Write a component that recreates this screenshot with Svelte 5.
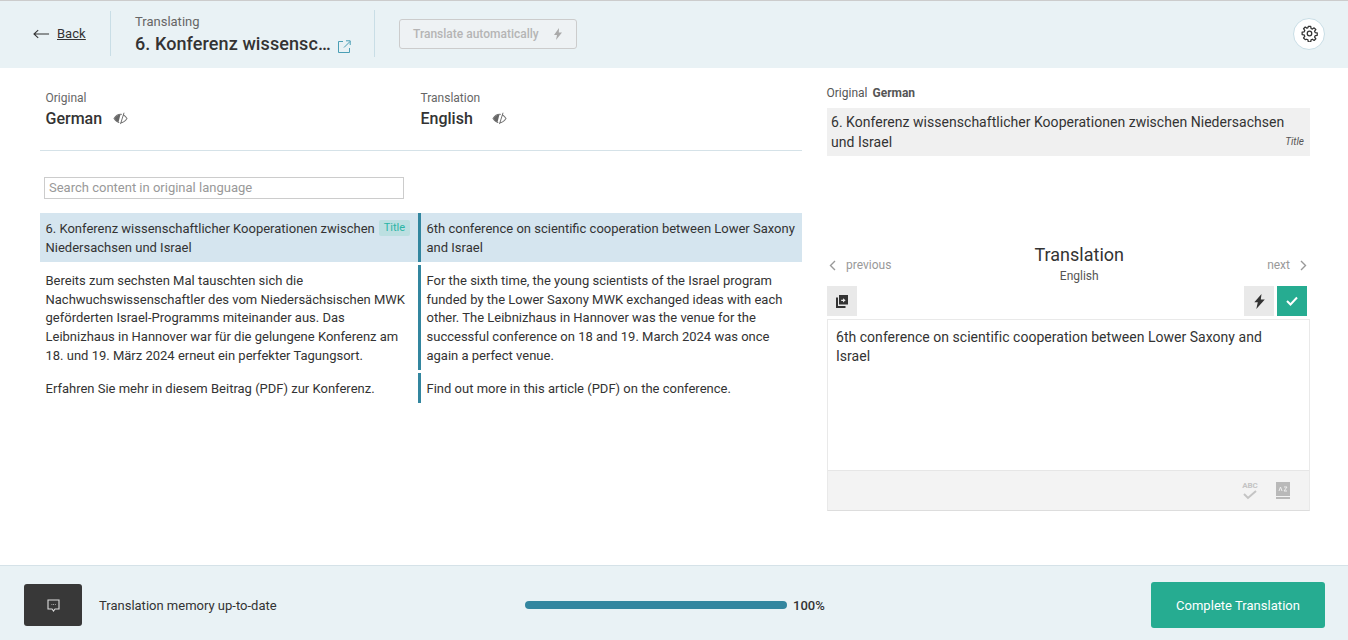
<script>
  const rows = [
    { o: '6. Konferenz wissenschaftlicher Kooperationen zwischen Niedersachsen und Israel', t: '6th conference on scientific cooperation between Lower Saxony and Israel', title: true },
    { o: 'Bereits zum sechsten Mal tauschten sich die Nachwuchswissenschaftler des vom Niedersächsischen MWK geförderten Israel-Programms miteinander aus. Das Leibnizhaus in Hannover war für die gelungene Konferenz am 18. und 19. März 2024 erneut ein perfekter Tagungsort.', t: 'For the sixth time, the young scientists of the Israel program funded by the Lower Saxony MWK exchanged ideas with each other. The Leibnizhaus in Hannover was the venue for the successful conference on 18 and 19. March 2024 was once again a perfect venue.' },
    { o: 'Erfahren Sie mehr in diesem Beitrag (PDF) zur Konferenz.', t: 'Find out more in this article (PDF) on the conference.' }
  ];
</script>

{#snippet eye()}
  <svg class="eye" viewBox="0 0 16 14" width="15" height="13" fill="none">
    <path d="M1 7c2-3 4.300-4.500 7-4.500S13 4 15 7c-2 3-4.300 4.500-7 4.500S3 10 1 7z" stroke="#777" stroke-width="1.100"/>
    <path d="M1.500 7C3 4.500 5 3 8 2.800L5.800 11C4 10.500 2.500 9 1.500 7z" fill="#666"/>
    <path d="M10.800 .8 7 13" stroke="#fff" stroke-width="1.600"/>
    <path d="M11.800 .8 8 13" stroke="#666" stroke-width="1"/>
  </svg>
{/snippet}

<div class="page">
  <header class="top">
    <a class="back" href="#back">
      <svg viewBox="0 0 18 10" width="17" height="10" fill="none" stroke="#333" stroke-width="1.100"><path d="M17 5H1M5.500 .8 1 5l4.500 4.200"/></svg>
      <span>Back</span>
    </a>
    <div class="title-block">
      <div class="small">Translating</div>
      <div class="title">
        <span>6. Konferenz wissensc…</span>
        <svg viewBox="0 0 13 13" width="13" height="13" fill="none" stroke="#4b9fb5" stroke-width="1"><path d="M5 1.500H.5v11h11V8M6 7.500 12 1.500M8 .8h4.200V5"/></svg>
      </div>
    </div>
    <div class="auto-wrap">
      <button class="auto" type="button">
        <span>Translate automatically</span>
        <svg viewBox="0 0 8 12" width="8" height="12" fill="#aaa"><path d="M5 0 0 7h3l-1 5 6-7.500H4.800z"/></svg>
      </button>
    </div>
    <button class="gear" type="button" aria-label="Settings">
      <svg viewBox="0 0 24 24" width="17" height="17" fill="none" stroke="#333" stroke-width="1.800">
        <circle cx="12" cy="12" r="3.200"/>
        <path d="M10.300 2h3.400l.5 2.900 1.900.8 2.400-1.700 2.400 2.400-1.700 2.400.8 1.900 2.900.5v3.400l-2.900.5-.8 1.900 1.700 2.400-2.400 2.400-2.400-1.700-1.900.8-.5 2.900h-3.400l-.5-2.900-1.900-.8L6 20.700l-2.400-2.400 1.700-2.400-.8-1.900-2.900-.5v-3.400l2.900-.5.800-1.900L3.600 5.300 6 2.900l2.400 1.700 1.400-.8z" stroke-linejoin="round"/>
      </svg>
    </button>
  </header>

  <main class="main">
    <section class="left">
      <div class="langs">
        <div class="lang">
          <div class="small lang-label">Original</div>
          <div class="lang-name"><span>German</span>{@render eye()}</div>
        </div>
        <div class="lang lang-t">
          <div class="small lang-label">Translation</div>
          <div class="lang-name"><span>English</span>{@render eye()}</div>
        </div>
      </div>
      <div class="search">Search content in original language</div>
      <div class="rows">
        {#each rows as r}
          <div class="row" class:active={r.title}>
            <div class="orig">
              {r.o}
              {#if r.title}<span class="tag">Title</span>{/if}
            </div>
            <div class="trans">{r.t}</div>
          </div>
        {/each}
      </div>
    </section>

    <section class="right">
      <div class="src-head"><span>Original</span><b>German</b></div>
      <div class="src">
        6. Konferenz wissenschaftlicher Kooperationen zwischen Niedersachsen und Israel
        <i>Title</i>
      </div>
      <div class="nav">
        <span class="nav-link">
          <svg viewBox="0 0 7 11" width="7" height="11" fill="none" stroke="#999" stroke-width="1.400"><path d="M6 1 1.500 5.500 6 10"/></svg>
          previous
        </span>
        <div class="nav-title">
          <div class="nt1">Translation</div>
          <div class="nt2">English</div>
        </div>
        <span class="nav-link">
          next
          <svg viewBox="0 0 7 11" width="7" height="11" fill="none" stroke="#999" stroke-width="1.400"><path d="M1 1l4.500 4.500L1 10"/></svg>
        </span>
      </div>
      <div class="tools">
        <button class="tool" type="button" aria-label="Copy">
          <svg viewBox="0 0 12 13" width="12" height="13"><path d="M3 0h9v9.500H3zM7 3.200v1.500H5.200v1.300H7v1.500l2.600-2.200z" fill="#333" fill-rule="evenodd"/><path d="M0 2.500h2v8.500h7.500v2H0z" fill="#333"/></svg>
        </button>
        <div class="spacer"></div>
        <button class="tool" type="button" aria-label="Auto">
          <svg viewBox="0 0 11 15" width="11" height="15" fill="#333"><path d="M7.500 0 .3 8.300h3.500L2.300 15 10.800 5.500H6.800z"/></svg>
        </button>
        <button class="tool ok" type="button" aria-label="Confirm">
          <svg viewBox="0 0 12 10" width="12" height="10" fill="none" stroke="#fff" stroke-width="2"><path d="M1 5l3.500 3.500L11 1.500"/></svg>
        </button>
      </div>
      <div class="editor">
        <div class="edit-text">6th conference on scientific cooperation between Lower Saxony and Israel</div>
        <div class="edit-foot">
          <div class="abc">
            <span>ABC</span>
            <svg viewBox="0 0 14 10" width="14" height="10" fill="none" stroke="#c4c4c4" stroke-width="2"><path d="M1 4l4 4 8-7"/></svg>
          </div>
          <svg class="dict" viewBox="0 0 16 17" width="16" height="17">
            <path d="M1 0h14v14H1z" fill="#b9b9b9"/>
            <path d="M1 15h14v2H1z" fill="#b9b9b9"/>
            <path d="M4 9l1.500-4L7 9M9 5h3l-3 4h3" stroke="#eee" stroke-width="1" fill="none"/>
          </svg>
        </div>
      </div>
    </section>
  </main>

  <footer class="foot">
    <button class="chat" type="button" aria-label="Comments">
      <svg viewBox="0 0 13 13" width="13" height="13" fill="none" stroke="#ddd" stroke-width="1.100"><path d="M1 1h11v9H8l-1.500 2L5 10H1z"/><path d="M4.500 5.500h.8M6.200 5.500H7M7.900 5.500h.8" stroke-width=".8"/></svg>
    </button>
    <span class="tm">Translation memory up-to-date</span>
    <div class="progress">
      <div class="bar"></div>
      <span class="pct">100%</span>
    </div>
    <button class="complete" type="button">Complete Translation</button>
  </footer>
</div>

<style>
  :global(body) { margin: 0; background: #fff; }
  .page {
    width: 1348px; height: 640px; display: flex; flex-direction: column; overflow: hidden;
    font-family: Roboto, "Liberation Sans", sans-serif; color: #333; font-size: 14px;
  }
  button { font-family: inherit; border: 0; padding: 0; }
  .top {
    flex: none; background: #e9f2f5; border-top: 1px solid #ccc;
    display: flex; align-items: center; padding: 0 23px 2px 33px; box-sizing: border-box;
    height: 68px;
  }
  .back {
    width: 78px; height: 45px; display: flex; align-items: center; gap: 7px;
    color: #333; font-size: 13px; border-right: 1px solid #c9dee6; box-sizing: border-box;
  }
  .back span { text-decoration: underline; }
  .title-block { width: 264px; height: 47px; padding-left: 24px; box-sizing: border-box; border-right: 1px solid #c9dee6; flex: none; }
  .small { font-size: 12px; color: #666; line-height: 14px; }
  .title-block .small { font-size: 13px; line-height: 17px; margin-top: 3px; }
  .title { font-size: 18px; font-weight: 500; display: flex; align-items: center; gap: 7px; line-height: 27px; white-space: nowrap; letter-spacing: .09px; }
  .title svg { margin-top: 5px; }
  .auto-wrap { flex: 1; padding-left: 24px; }
  .auto {
    width: 178px; height: 30px; display: flex; align-items: center; justify-content: space-between; padding: 0 14px 0 13px;
    box-sizing: border-box; background: #eef2f4; border: 1px solid #ccc; border-radius: 3px;
    color: #b5b5b5; font-size: 12px; font-weight: 500;
  }
  .gear {
    width: 32px; height: 32px; border-radius: 50%; background: #fff; border: 1px solid #c9dee6;
    display: flex; align-items: center; justify-content: center; box-sizing: border-box;
  }
  .main { flex: 1; display: flex; min-height: 0; }
  .left { width: 762px; margin-left: 40px; flex: none; }
  .langs { display: flex; height: 82px; border-bottom: 1px solid #d5e2e8; box-sizing: content-box; padding-left: 5.5px; }
  .lang { width: 375px; padding-top: 23px; }
  .lang-label { line-height: 14px; }
  .lang-name { display: flex; align-items: center; font-size: 16px; font-weight: 500; line-height: 22px; margin-top: 3px; }
  .lang-name .eye { margin: 0 0 1px 11px; }
  .lang-t .lang-name .eye { margin-left: 19px; }
  .search {
    width: 360px; height: 22px; box-sizing: border-box; margin: 26px 0 0 4px; border: 1px solid #ccc;
    color: #999; font-size: 13px; line-height: 20px; padding-left: 4px;
  }
  .rows { margin-top: 14px; display: flex; flex-direction: column; gap: 3px; }
  .row { display: flex; font-size: 13px; line-height: 18.9px; }
  .row.active { background: #d5e5ef; margin-bottom: .3px; }
  .orig { width: 378px; flex: none; box-sizing: border-box; padding: 6.6px 5px 4.3px 5.5px; position: relative; }
  .trans { flex: 1; border-left: 3px solid #33869f; padding: 6.6px 5px 4.3px 5.5px; }
  .tag {
    position: absolute; right: 8px; top: 7px; height: 16px; line-height: 15px; padding: 0 5px; font-size: 11px;
    color: #2bb5a5; background: #bcdfe1; border-radius: 2px;
  }
  .right { width: 483px; margin-left: 25px; flex: none; }
  .src-head { font-size: 12px; color: #555; margin-top: 17px; display: flex; gap: 5px; line-height: 16px; margin-left: -.5px; }
  .src-head b { font-weight: 700; color: #555; }
  .src {
    margin-top: 7px; height: 48px; box-sizing: border-box; background: #f0f0f0; padding: 4px 4px; font-size: 14px; line-height: 20px;
    position: relative; color: #333; letter-spacing: .03px;
  }
  .src i { position: absolute; right: 6px; bottom: 8px; font-size: 10px; line-height: 12px; color: #555; letter-spacing: 0; }
  .nav { margin-top: 88px; height: 42px; display: flex; justify-content: space-between; align-items: flex-start; padding: 0 3px 0 2px; }
  .nav-link { display: flex; align-items: center; gap: 10px; color: #999; font-size: 12px; line-height: 14px; margin-top: 14px; }
  .nav-title { text-align: center; margin-right: 0; }
  .nt1 { font-size: 18px; line-height: 22px; color: #333; }
  .nt2 { font-size: 12px; line-height: 14px; margin-top: 3px; color: #555; }
  .tools { display: flex; gap: 3px; height: 30px; padding: 0 3px 0 0; }
  .spacer { flex: 1; }
  .tool { width: 30px; height: 30px; background: #e9e9e9; display: flex; align-items: center; justify-content: center; }
  .tool.ok { background: #26ac91; }
  .editor { margin-top: 3px; border: 1px solid #e9e9e9; border-bottom-color: #ddd; height: 192px; box-sizing: border-box; display: flex; flex-direction: column; }
  .edit-text { flex: 1; padding: 8px 30px 8px 8px; font-size: 14px; line-height: 19px; color: #333; letter-spacing: .03px; }
  .edit-foot { height: 39px; background: #f3f3f3; border-top: 1px solid #e6e6e6; display: flex; align-items: center; justify-content: flex-end; gap: 17px; padding-right: 18px; }
  .abc { display: flex; flex-direction: column; align-items: center; width: 16px; }
  .abc span { font-size: 8px; font-weight: 700; line-height: 8px; color: #c4c4c4; }
  .foot {
    height: 75px; box-sizing: border-box; flex: none; background: #e9f2f5; border-top: 1px solid #d5e2e8;
    display: flex; align-items: center; padding: 4px 23px 0 24px; position: relative;
  }
  .chat { width: 58px; height: 42px; background: #383838; border-radius: 3px; display: flex; align-items: center; justify-content: center; }
  .tm { font-size: 13px; margin-left: 17px; width: 426px; flex: none; }
  .progress { display: flex; align-items: center; gap: 6px; flex: 1; }
  .bar { width: 262px; height: 8px; border-radius: 4px; background: #33869f; }
  .pct { font-size: 13px; font-weight: 500; }
  .complete { width: 174px; height: 46px; background: #26ac91; color: #fff; font-size: 13px; font-weight: 400; letter-spacing: .03px; border-radius: 3px; }
</style>
